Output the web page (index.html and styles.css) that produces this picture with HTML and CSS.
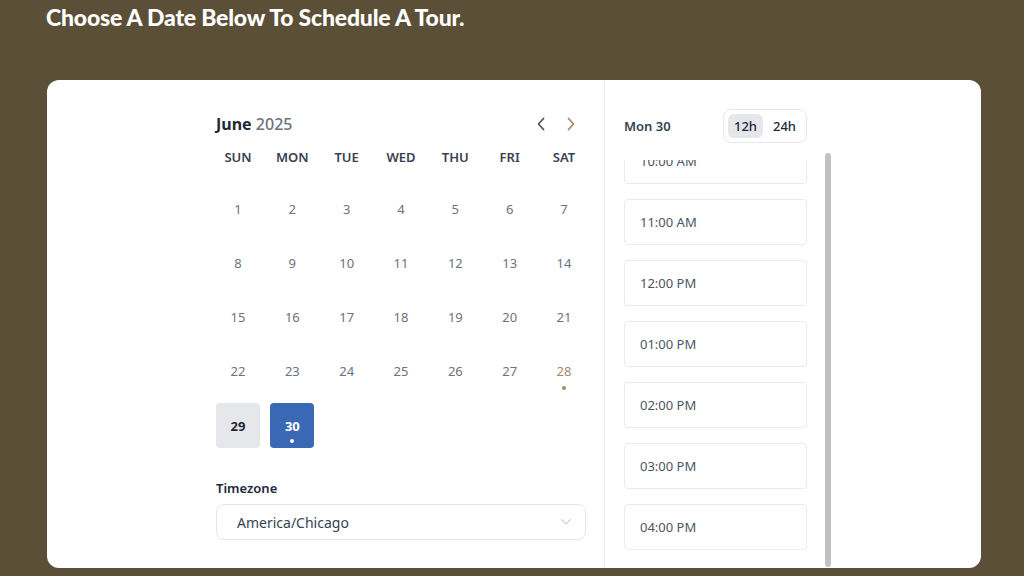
FILE: index.html
```html
<!DOCTYPE html>
<html lang="en">
<head>
<meta charset="utf-8">
<title>Schedule A Tour</title>
<link rel="stylesheet" href="styles.css">
</head>
<body>
<h1 class="page-title">Choose A Date Below To Schedule A Tour.</h1>
<div class="card">
  <section class="cal-col">
    <div class="cal">
      <div class="cal-head">
        <div class="month"><span class="m">June</span> <span class="y">2025</span></div>
        <div class="nav">
          <button class="nav-btn prev" aria-label="Previous month">
            <svg width="10" height="14" viewBox="0 0 10 14"><path d="M7.5 1.5 2.5 7l5 5.5" fill="none" stroke="currentColor" stroke-width="1.8" stroke-linecap="round" stroke-linejoin="round"/></svg>
          </button>
          <button class="nav-btn next" aria-label="Next month">
            <svg width="10" height="14" viewBox="0 0 10 14"><path d="M2.5 1.5 7.5 7l-5 5.5" fill="none" stroke="currentColor" stroke-width="1.8" stroke-linecap="round" stroke-linejoin="round"/></svg>
          </button>
        </div>
      </div>
      <div class="weekdays">
        <span>SUN</span><span>MON</span><span>TUE</span><span>WED</span><span>THU</span><span>FRI</span><span>SAT</span>
      </div>
      <div class="days">
        <span class="day">1</span><span class="day">2</span><span class="day">3</span><span class="day">4</span><span class="day">5</span><span class="day">6</span><span class="day">7</span>
        <span class="day">8</span><span class="day">9</span><span class="day">10</span><span class="day">11</span><span class="day">12</span><span class="day">13</span><span class="day">14</span>
        <span class="day">15</span><span class="day">16</span><span class="day">17</span><span class="day">18</span><span class="day">19</span><span class="day">20</span><span class="day">21</span>
        <span class="day">22</span><span class="day">23</span><span class="day">24</span><span class="day">25</span><span class="day">26</span><span class="day">27</span><span class="day today">28<i class="dot"></i></span>
        <span class="day avail">29</span><span class="day selected">30<i class="dot"></i></span>
      </div>
      <label class="tz-label">Timezone</label>
      <div class="tz-select">
        <span>America/Chicago</span>
        <svg width="12" height="8" viewBox="0 0 12 8"><path d="M1.5 1.5 6 6l4.5-4.5" fill="none" stroke="#d1d5db" stroke-width="1.4" stroke-linecap="round" stroke-linejoin="round"/></svg>
      </div>
    </div>
  </section>
  <section class="time-col">
    <div class="time-inner">
      <div class="time-head">
        <span class="sel-date">Mon 30</span>
        <div class="toggle">
          <span class="opt active">12h</span>
          <span class="opt">24h</span>
        </div>
      </div>
      <div class="scroll-area">
        <div class="viewport">
          <ul class="slots">
            <li class="slot">10:00 AM</li>
            <li class="slot">11:00 AM</li>
            <li class="slot">12:00 PM</li>
            <li class="slot">01:00 PM</li>
            <li class="slot">02:00 PM</li>
            <li class="slot">03:00 PM</li>
            <li class="slot">04:00 PM</li>
          </ul>
        </div>
        <div class="scrollbar"><div class="thumb"></div></div>
      </div>
    </div>
  </section>
</div>
</body>
</html>
```
FILE: styles.css
```css
* { box-sizing: border-box; }
html, body { margin: 0; padding: 0; }
body {
  width: 1024px;
  height: 576px;
  overflow: hidden;
  background: #5b5037;
  font-family: "Noto Sans", "Open Sans", sans-serif;
  padding: 0 43px 0 47px;
}
.page-title {
  margin: 0;
  padding-top: 1px;
  height: 80px;
  margin-left: -1px;
  color: #ffffff;
  font-family: Lato, "Open Sans", sans-serif;
  font-weight: 900;
  font-size: 23px;
  line-height: 32px;
  letter-spacing: -0.2px;
}
.card {
  width: 934px;
  height: 488px;
  background: #ffffff;
  border-radius: 12px;
  display: flex;
  overflow: hidden;
}
.cal-col {
  width: 558px;
  border-right: 1px solid #eceef1;
  padding: 32px 18px 0 169px;
}
.cal { width: 370px; }
.cal-head {
  display: flex;
  justify-content: space-between;
  align-items: center;
  height: 24px;
}
.month { font-size: 16px; line-height: 24px; }
.month .m { font-weight: 700; color: #1f2937; }
.month .y { font-weight: 500; color: #6b7280; }
.nav { display: flex; gap: 16px; margin-right: 8px; }
.nav-btn {
  border: 0; background: none; padding: 0;
  width: 14px; height: 20px;
  display: flex; align-items: center; justify-content: center;
  cursor: pointer;
}
.nav-btn.prev { color: #4b5563; }
.nav-btn.next { color: #a48a6b; }
.weekdays {
  margin-top: 11px;
  display: grid;
  grid-template-columns: repeat(7, 44px);
  justify-content: space-between;
  height: 20px;
  align-items: center;
}
.weekdays span {
  text-align: center;
  font-size: 13px;
  font-weight: 600;
  color: #374151;
}
.days {
  margin-top: 19px;
  display: grid;
  grid-template-columns: repeat(7, 44px);
  grid-auto-rows: 45px;
  row-gap: 9.25px;
  justify-content: space-between;
}
.day {
  position: relative;
  display: flex;
  align-items: center;
  justify-content: center;
  font-size: 13px;
  color: #6b7280;
  border-radius: 4px;
}
.day.today { color: #a48a6b; }
.day .dot {
  position: absolute;
  left: 50%;
  bottom: 4px;
  width: 4px; height: 4px;
  margin-left: -2px;
  border-radius: 50%;
  background: #a48a6b;
}
.day.avail {
  background: #e5e7eb;
  color: #1f2937;
  font-weight: 700;
}
.day.selected {
  background: #3a68b4;
  color: #ffffff;
  font-weight: 700;
}
.day.selected .dot { background: #ffffff; bottom: 5px; }
.tz-label {
  display: block;
  margin-top: 31px;
  font-size: 13px;
  font-weight: 600;
  color: #1f2937;
  line-height: 18px;
}
.tz-select {
  margin-top: 7px;
  height: 36px;
  border: 1px solid #e5e7eb;
  border-radius: 8px;
  display: flex;
  align-items: center;
  justify-content: space-between;
  padding: 0 13px 0 20px;
  font-size: 14px;
  color: #374151;
}
.time-col {
  flex: 1;
  padding: 29px 0 0 19px;
  overflow: hidden;
}
.time-inner { width: 208px; }
.time-head {
  width: 183px;
  display: flex;
  justify-content: space-between;
  align-items: center;
  height: 34px;
}
.sel-date {
  font-size: 13px;
  font-weight: 600;
  color: #374151;
}
.toggle {
  display: flex;
  height: 34px;
  width: 84px;
  padding: 4px;
  gap: 4px;
  border: 1px solid #e5e7eb;
  border-radius: 8px;
}
.opt {
  width: 36px;
  display: flex;
  align-items: center;
  justify-content: center;
  font-size: 13px;
  font-weight: 500;
  color: #1f2937;
  border-radius: 6px;
}
.opt.active { background: #e5e7eb; }
.scroll-area {
  margin-top: 10px;
  display: flex;
  justify-content: space-between;
  height: 414px;
}
.viewport {
  width: 183px;
  margin-top: 7px;
  overflow: hidden;
}
.slots {
  list-style: none;
  margin: -22px 0 0 0;
  padding: 0;
  display: flex;
  flex-direction: column;
  gap: 15px;
}
.slot {
  height: 46px;
  border: 1px solid #e8eaee;
  border-radius: 4px;
  display: flex;
  align-items: center;
  padding-left: 15px;
  font-size: 13px;
  color: #4b5563;
}
.scrollbar {
  width: 6px;
  margin-right: 1px;
}
.thumb {
  width: 6px;
  height: 100%;
  background: #c1c1c1;
  border-radius: 3px;
}
```
